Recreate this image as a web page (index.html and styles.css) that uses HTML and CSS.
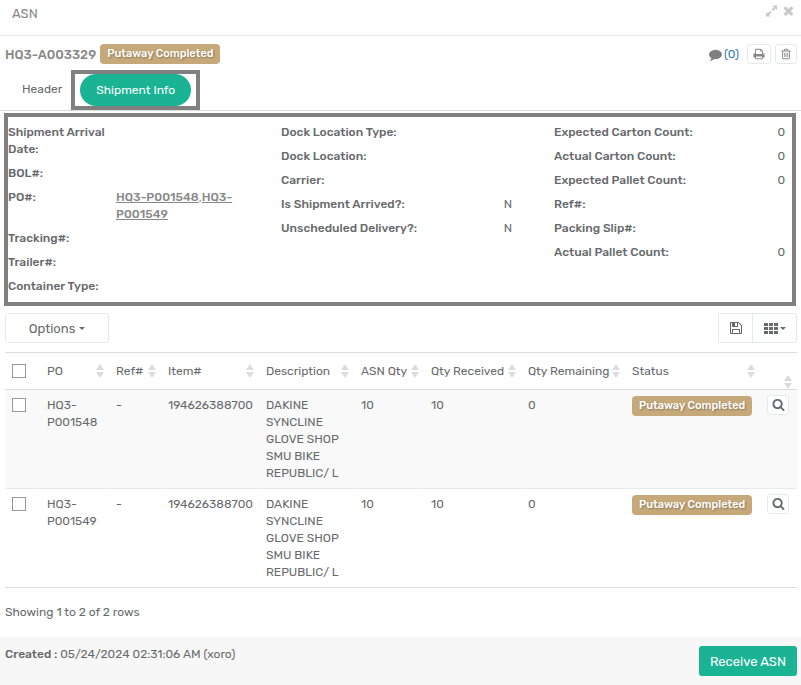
FILE: index.html
```html
<!DOCTYPE html>
<html lang="en">
<head>
    <meta charset="UTF-8">
    <meta name="viewport" content="width=device-width, initial-scale=1.0">
    <title>ASN</title>
    <link rel="stylesheet" href="styles.css">
</head>
<body>
    <!-- shared icons -->
    <svg class="sprite" aria-hidden="true">
        <symbol id="icon-sort" viewBox="0 0 8 14"><path d="M4 0l4 6H0zM4 14L0 8h8z"/></symbol>
        <symbol id="icon-search" viewBox="0 0 1792 1792"><path d="M1216 832q0-185-131.5-316.5t-316.5-131.5-316.5 131.5-131.5 316.5 131.5 316.5 316.5 131.5 316.5-131.5 131.5-316.5zm512 832q0 52-38 90t-90 38q-54 0-90-38l-343-342q-179 124-399 124-143 0-273.5-55.5t-225-150-150-225-55.5-273.5 55.5-273.5 150-225 225-150 273.5-55.5 273.5 55.5 225 150 150 225 55.5 273.5q0 220-124 399l343 343q37 37 37 90z"/></symbol>
    </svg>

    <header class="title-bar">
        <h1>ASN</h1>
        <div class="window-tools">
            <button type="button" aria-label="Expand">
                <svg class="icon" viewBox="0 0 12 12"><path d="M7 0h5v5l-1.700-1.700L7.500 6.100 5.900 4.500 8.700 1.700zM5 12H0V7l1.700 1.700 2.800-2.800 1.600 1.600-2.800 2.800z"/></svg>
            </button>
            <button type="button" aria-label="Close">
                <svg class="icon icon-close" viewBox="200 240 1392 1408"><path d="M1490 1322q0 40-28 68l-136 136q-28 28-68 28t-68-28l-294-294-294 294q-28 28-68 28t-68-28l-136-136q-28-28-28-68t28-68l294-294-294-294q-28-28-28-68t28-68l136-136q28-28 68-28t68 28l294 294 294-294q28-28 68-28t68 28l136 136q28 28 28 68t-28 68l-294 294 294 294q28 28 28 68z"/></svg>
            </button>
        </div>
    </header>

    <main>
        <div class="record-bar">
            <h2>HQ3-A003329</h2>
            <span class="badge">Putaway Completed</span>
            <div class="record-tools">
                <a class="comments" href="#">
                    <svg class="icon icon-comment" viewBox="0 0 1792 1792"><path d="M1792 896q0 174-120 321.500t-326 233-450 85.500q-70 0-145-8-198 175-460 242-49 14-114 22-17 2-30.500-9t-17.500-29v-1q-3-4-.5-12t2-10 4.500-9.500l6-9 7-8.500 8-9q7-8 31-34.500t34.500-38 31-39.500 32.500-51 27-59 26-76q-157-89-247.500-220t-90.500-281q0-130 71-248.500t191-204.500 286-136.500 348-50.500q244 0 450 85.500t326 233 120 321.500z"/></svg>
                    (0)</a>
                <button type="button" class="btn btn-print" aria-label="Print">
                    <svg class="icon" viewBox="0 0 1792 1792"><path d="M448 1536h896v-256h-896v256zm0-640h896v-384h-160q-40 0-68-28t-28-68v-160h-640v640zm1152 64q0-26-19-45t-45-19-45 19-19 45 19 45 45 19 45-19 19-45zm128 0v416q0 13-9.500 22.500t-22.500 9.500h-224v160q0 40-28 68t-68 28h-960q-40 0-68-28t-28-68v-160h-224q-13 0-22.500-9.500t-9.500-22.500v-416q0-79 56.500-135.500t135.500-56.500h64v-544q0-40 28-68t68-28h672q40 0 88 20t76 48l152 152q28 28 48 76t20 88v256h64q79 0 135.500 56.500t56.500 135.500z"/></svg>
                </button>
                <button type="button" class="btn btn-small" aria-label="Delete">
                    <svg class="icon" viewBox="0 0 1792 1792"><path d="M704 736v576q0 14-9 23t-23 9h-64q-14 0-23-9t-9-23v-576q0-14 9-23t23-9h64q14 0 23 9t9 23zm256 0v576q0 14-9 23t-23 9h-64q-14 0-23-9t-9-23v-576q0-14 9-23t23-9h64q14 0 23 9t9 23zm256 0v576q0 14-9 23t-23 9h-64q-14 0-23-9t-9-23v-576q0-14 9-23t23-9h64q14 0 23 9t9 23zm128 724v-948h-896v948q0 22 7 40.500t14.500 27 10.500 8.500h832q3 0 10.500-8.500t14.500-27 7-40.500zm-672-1076h448l-48-117q-7-9-17-11h-317q-10 2-17 11zm928 32v64q0 14-9 23t-23 9h-96v948q0 83-47 143.500t-113 60.500h-832q-66 0-113-58.500t-47-141.500v-952h-96q-14 0-23-9t-9-23v-64q0-14 9-23t23-9h309l70-167q15-37 54-63t79-26h320q40 0 79 26t54 63l70 167h309q14 0 23 9t9 23z"/></svg>
                </button>
            </div>
        </div>

        <nav class="tabs">
            <a class="tab" href="#">Header</a>
            <div class="tab-frame">
                <a class="tab active" href="#" aria-current="page">Shipment Info</a>
            </div>
        </nav>

        <section class="shipment">
            <dl class="wide-values">
                <div><dt>Shipment Arrival Date:</dt><dd></dd></div>
                <div><dt>BOL#:</dt><dd></dd></div>
                <div><dt>PO#:</dt><dd><a href="#">HQ3-P001548</a>,<a href="#">HQ3-P001549</a></dd></div>
                <div><dt>Tracking#:</dt><dd></dd></div>
                <div><dt>Trailer#:</dt><dd></dd></div>
                <div><dt>Container Type:</dt><dd></dd></div>
            </dl>
            <dl>
                <div><dt>Dock Location Type:</dt><dd></dd></div>
                <div><dt>Dock Location:</dt><dd></dd></div>
                <div><dt>Carrier:</dt><dd></dd></div>
                <div><dt>Is Shipment Arrived?:</dt><dd>N</dd></div>
                <div><dt>Unscheduled Delivery?:</dt><dd>N</dd></div>
            </dl>
            <dl>
                <div><dt>Expected Carton Count:</dt><dd>0</dd></div>
                <div><dt>Actual Carton Count:</dt><dd>0</dd></div>
                <div><dt>Expected Pallet Count:</dt><dd>0</dd></div>
                <div><dt>Ref#:</dt><dd></dd></div>
                <div><dt>Packing Slip#:</dt><dd></dd></div>
                <div><dt>Actual Pallet Count:</dt><dd>0</dd></div>
            </dl>
        </section>

        <div class="toolbar">
            <button type="button" class="btn btn-options">Options <span class="caret"></span></button>
            <div class="btn-group">
                <button type="button" class="btn" aria-label="Save">
                    <svg class="icon" viewBox="0 0 1792 1792"><path d="M512 1536h768v-384h-768v384zm896 0h128v-896q0-14-10-38.500t-20-34.500l-281-281q-10-10-34-20t-39-10v416q0 40-28 68t-68 28h-576q-40 0-68-28t-28-68v-416h-128v1280h128v-416q0-40 28-68t68-28h832q40 0 68 28t28 68v416zm-384-928v-320q0-13-9.500-22.500t-22.500-9.500h-192q-13 0-22.500 9.500t-9.500 22.500v320q0 13 9.500 22.500t22.500 9.500h192q13 0 22.500-9.500t9.500-22.500zm640 32v928q0 40-28 68t-68 28h-1344q-40 0-68-28t-28-68v-1344q0-40 28-68t68-28h928q40 0 88 20t76 48l280 280q28 28 48 76t20 88z"/></svg>
                </button>
                <button type="button" class="btn btn-columns" aria-label="Columns">
                    <svg class="icon" viewBox="0 0 14 14"><path d="M0 2h4v3H0zM5 2h4v3H5zM10 2h4v3h-4zM0 6h4v3H0zM5 6h4v3H5zM10 6h4v3h-4zM0 10h4v3H0zM5 10h4v3H5zM10 10h4v3h-4z"/></svg>
                    <span class="caret"></span>
                </button>
            </div>
        </div>

        <table class="items">
            <thead>
                <tr>
                    <th class="col-check"><input type="checkbox" aria-label="Select all"></th>
                    <th class="col-po"><button type="button" class="sort">PO <svg><use href="#icon-sort"/></svg></button></th>
                    <th class="col-ref"><button type="button" class="sort">Ref# <svg><use href="#icon-sort"/></svg></button></th>
                    <th class="col-item"><button type="button" class="sort">Item# <svg><use href="#icon-sort"/></svg></button></th>
                    <th class="col-desc"><button type="button" class="sort">Description <svg><use href="#icon-sort"/></svg></button></th>
                    <th class="col-qty"><button type="button" class="sort">ASN Qty <svg><use href="#icon-sort"/></svg></button></th>
                    <th class="col-received"><button type="button" class="sort">Qty Received <svg><use href="#icon-sort"/></svg></button></th>
                    <th class="col-remaining"><button type="button" class="sort">Qty Remaining <svg><use href="#icon-sort"/></svg></button></th>
                    <th><button type="button" class="sort">Status <svg><use href="#icon-sort"/></svg></button></th>
                    <th class="col-action"><button type="button" class="sort" aria-label="Sort"><svg><use href="#icon-sort"/></svg></button></th>
                </tr>
            </thead>
            <tbody>
                <tr>
                    <td><input type="checkbox" aria-label="Select HQ3-P001548"></td>
                    <td>HQ3-P001548</td>
                    <td>-</td>
                    <td>194626388700</td>
                    <td>DAKINE SYNCLINE GLOVE SHOP SMU BIKE REPUBLIC/ L</td>
                    <td>10</td>
                    <td>10</td>
                    <td>0</td>
                    <td class="cell-status"><span class="badge">Putaway Completed</span></td>
                    <td class="cell-action"><button type="button" class="btn btn-small" aria-label="View"><svg class="icon"><use href="#icon-search"/></svg></button></td>
                </tr>
                <tr>
                    <td><input type="checkbox" aria-label="Select HQ3-P001549"></td>
                    <td>HQ3-P001549</td>
                    <td>-</td>
                    <td>194626388700</td>
                    <td>DAKINE SYNCLINE GLOVE SHOP SMU BIKE REPUBLIC/ L</td>
                    <td>10</td>
                    <td>10</td>
                    <td>0</td>
                    <td class="cell-status"><span class="badge">Putaway Completed</span></td>
                    <td class="cell-action"><button type="button" class="btn btn-small" aria-label="View"><svg class="icon"><use href="#icon-search"/></svg></button></td>
                </tr>
            </tbody>
        </table>
        <p class="row-count">Showing 1 to 2 of 2 rows</p>
    </main>

    <footer class="footer">
        <p><strong>Created :</strong> 05/24/2024 02:31:06 AM (xoro)</p>
        <button type="button" class="btn-receive">Receive ASN</button>
    </footer>
</body>
</html>
```
FILE: styles.css
```css
* {
    box-sizing: border-box;
}
body {
    margin: 0;
    font-family: Rubik, Roboto, sans-serif;
    font-size: 12px;
    line-height: 17px;
    color: #676a6c;
    background: #fff;
}
h1, h2, p, dl, dd {
    margin: 0;
}
button {
    font: inherit;
    color: inherit;
    cursor: pointer;
}
a {
    color: inherit;
    text-decoration: none;
}
strong, dt {
    font-weight: 500;
}
.sprite {
    display: none;
}
.icon {
    display: block;
    width: 12px;
    height: 12px;
    fill: currentColor;
}

/* title bar */
.title-bar {
    display: flex;
    justify-content: space-between;
    height: 36px;
    padding: 5px 7px 0 12px;
    border-bottom: 1px solid #e7e7e7;
    color: #888;
}
.title-bar h1 {
    font-size: 13px;
    font-weight: 400;
}
.window-tools {
    display: flex;
    align-items: flex-start;
    gap: 6px;
}
.window-tools button {
    padding: 0;
    border: 0;
    background: none;
    color: #c8c8c8;
}
.window-tools .icon {
    width: 11px;
}

/* record number, status and actions */
.record-bar {
    display: flex;
    align-items: center;
    gap: 4px;
    padding: 8px 4px 5px 5px;
    color: #888;
}
.record-bar h2 {
    font-size: 13px;
    font-weight: 500;
}
.badge {
    display: inline-block;
    padding: 0 7px;
    border-radius: 4px;
    background: #c5a97a;
    color: #fff;
    font-size: 11px;
    font-weight: 500;
    line-height: 20px;
    text-shadow: 1px 1px 2px rgba(0, 0, 0, 0.3);
    white-space: nowrap;
}
.record-tools {
    display: flex;
    align-items: center;
    gap: 4px;
    margin-left: auto;
}
.comments {
    display: flex;
    align-items: center;
    gap: 2px;
    margin-right: 4px;
    color: #337ab7;
}
.icon-comment {
    width: 13px;
    height: 13px;
    fill: #808080;
}
.btn {
    display: flex;
    align-items: center;
    justify-content: center;
    padding: 0;
    border: 1px solid #e7eaec;
    border-radius: 3px;
    background: #fff;
}
.btn-small {
    width: 22px;
    height: 20px;
}
.btn-print {
    width: 24px;
    height: 20px;
}

/* tabs */
.tabs {
    display: flex;
    align-items: center;
    height: 42px;
    padding-left: 10px;
    border-bottom: 1px solid #ddd;
}
.tab {
    padding: 0 12px;
}
.tab-frame {
    margin-left: -3px;
    padding: 0 5px;
    border: 4px solid #808080;
}
.tab.active {
    display: block;
    padding: 0 16px;
    border-radius: 16px;
    background: #1ab394;
    color: #fff;
    line-height: 32px;
}

/* shipment info */
.shipment {
    display: grid;
    grid-template-columns: repeat(3, 1fr);
    gap: 42px;
    margin: 2px 5px 0 4px;
    padding: 6px 7px 1px 0;
    border: 4px solid #808080;
}
.shipment dl > div {
    display: flex;
    justify-content: space-between;
    padding: 1px 0 6px;
}
.shipment .wide-values dt {
    width: 108px;
    padding-right: 5px;
}
.shipment .wide-values dd {
    flex: 1;
    color: #888;
}
.shipment dd a {
    font-weight: 500;
    text-decoration: underline;
}

/* toolbar */
.toolbar {
    display: flex;
    justify-content: space-between;
    padding: 7px 4px 9px 5px;
}
.toolbar .btn {
    height: 30px;
}
.btn-options {
    gap: 4px;
    width: 104px;
    font-size: 13px;
}
.caret {
    border: 3px solid transparent;
    border-top-color: currentColor;
    border-bottom: 0;
}
.btn-group {
    display: flex;
}
.btn-group .btn {
    width: 35px;
    border-radius: 0;
}
.btn-group .btn-columns {
    gap: 2px;
    width: 45px;
    margin-left: -1px;
    border-radius: 0 3px 3px 0;
}
.btn-group .icon {
    width: 14px;
    height: 14px;
}

/* items table */
.items {
    width: calc(100% - 9px);
    margin: 0 4px 0 5px;
    border-spacing: 0;
    border-top: 1px solid #ddd;
    border-bottom: 1px solid #ddd;
    table-layout: fixed;
}
.items th {
    height: 37px;
    padding: 0 5px 0 7px;
    border-bottom: 1px solid #ddd;
    font-weight: 400;
    text-align: left;
}
.items td {
    padding: 7px 7px 6px;
    border-right: 1px solid transparent;
    border-bottom: 1px solid #e7eaec;
    vertical-align: top;
}
.items tbody tr:last-child td {
    border-bottom: 0;
}
.items tbody tr:nth-child(odd) {
    background: #f9f9f9;
}
.items input {
    display: block;
    width: 14px;
    height: 14px;
    margin: 0;
    border: 1px solid #999;
    background: #fff;
    appearance: none;
}
.items td input {
    margin-top: 1px;
}
.items input:checked {
    background: #1ab394;
}
.sort {
    display: flex;
    align-items: center;
    justify-content: space-between;
    width: 100%;
    padding: 0;
    border: 0;
    background: none;
    white-space: nowrap;
}
.sort svg {
    width: 8px;
    height: 14px;
    fill: #dcdcdc;
}
.col-check { width: 35px; }
.col-po { width: 69px; }
.col-ref { width: 52px; }
.col-item { width: 98px; }
.col-desc { width: 95px; }
.col-qty { width: 70px; }
.col-received { width: 97px; }
.col-remaining { width: 104px; }
.col-action { width: 37px; }
.items .col-action {
    vertical-align: bottom;
}
.col-action .sort {
    justify-content: flex-end;
}
.items .cell-status {
    padding-top: 6px;
}
.items .cell-action {
    padding-top: 5px;
}
.cell-action .btn {
    align-items: flex-start;
    padding-top: 2px;
}
.cell-action .icon {
    width: 13px;
    height: 13px;
}
.row-count {
    padding: 16px 5px;
}

/* footer */
.footer {
    display: flex;
    align-items: flex-start;
    justify-content: space-between;
    padding: 9px 4px 9px 5px;
    background: #f7f7f7;
}
.btn-receive {
    height: 30px;
    padding: 0 11px;
    border: 0;
    border-radius: 3px;
    background: #1ab394;
    color: #fff;
    font-size: 13px;
}
```
